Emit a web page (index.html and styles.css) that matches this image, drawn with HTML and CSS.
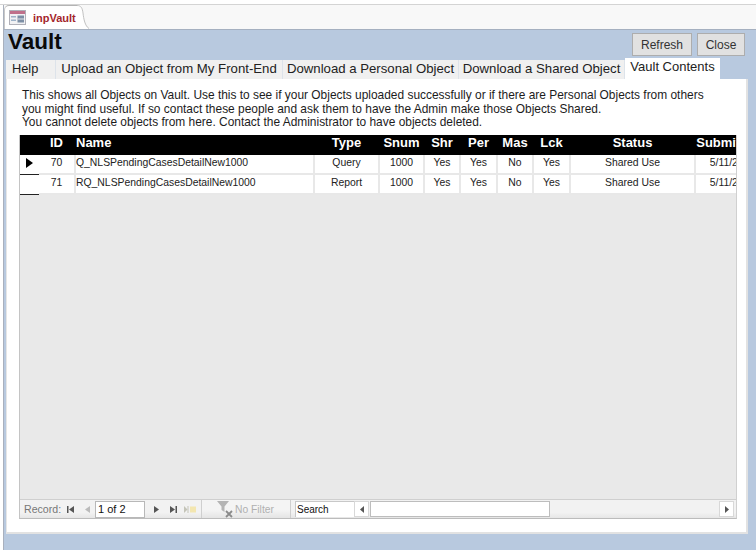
FILE: index.html
```html
<!DOCTYPE html>
<html lang="en">
<head>
<meta charset="utf-8">
<title>inpVault</title>
<link rel="stylesheet" href="styles.css">
</head>
<body>
<div class="app">
  <div class="top-strip"></div>
  <div class="doc-tabs">
    <div class="doc-tab">
      <svg class="form-icon" width="17" height="15" viewBox="0 0 17 15">
        <rect x="0.5" y="0.5" width="16" height="14" fill="#f1f1f3" stroke="#b0b0b8"/>
        <rect x="1" y="1" width="15" height="3" fill="#c0708a"/>
        <rect x="2" y="6" width="5" height="1.500" fill="#9db2c8"/>
        <rect x="2" y="9.500" width="5" height="1.500" fill="#9db2c8"/>
        <rect x="8.500" y="5.500" width="6.500" height="7" fill="#7d8fa5"/>
        <rect x="8.500" y="8.500" width="6.500" height="1" fill="#e6e8ec"/>
      </svg>
      <span class="doc-tab-label">inpVault</span>
    </div>
    <svg class="doc-tab-curve" width="12" height="24" viewBox="0 0 18 24" preserveAspectRatio="none">
      <path d="M0 0 C6 0 8 3 9 8 C10 14 12 21 18 24 L0 24 Z" fill="#fff"/>
      <path d="M0 0.500 C6 0.500 8 3 9 8 C10 14 12 21 18 23.500" fill="none" stroke="#b4b4b4"/>
    </svg>
  </div>
  <div class="form">
    <div class="form-head">
      <h1 class="title">Vault</h1>
      <div class="actions">
        <button class="btn btn-refresh">Refresh</button>
        <button class="btn btn-close">Close</button>
      </div>
    </div>
    <div class="tabs">
      <div class="tab tab-help">Help</div>
      <div class="tab tab-upload">Upload an Object from My Front-End</div>
      <div class="tab tab-personal">Download a Personal Object</div>
      <div class="tab tab-shared">Download a Shared Object</div>
      <div class="tab tab-active">Vault Contents</div>
    </div>
    <div class="panel">
      <p class="intro">This shows all Objects on Vault. Use this to see if your Objects uploaded successfully or if there are Personal Objects from others<br>you might find useful. If so contact these people and ask them to have the Admin make those Objects Shared.<br>You cannot delete objects from here. Contact the Administrator to have objects deleted.</p>
      <div class="sheet">
        <div class="sheet-grid">
          <div class="row row-head">
            <div class="cell"></div>
            <div class="cell">ID</div>
            <div class="cell cell-left">Name</div>
            <div class="cell">Type</div>
            <div class="cell">Snum</div>
            <div class="cell">Shr</div>
            <div class="cell">Per</div>
            <div class="cell">Mas</div>
            <div class="cell">Lck</div>
            <div class="cell">Status</div>
            <div class="cell cell-submit">Submitted</div>
          </div>
          <div class="row row-data">
            <div class="cell selector"><svg width="7" height="10" viewBox="0 0 7 10"><path d="M0 0 L7 5 L0 10 Z" fill="#000"/></svg></div>
            <div class="cell">70</div>
            <div class="cell cell-left">Q_NLSPendingCasesDetailNew1000</div>
            <div class="cell">Query</div>
            <div class="cell">1000</div>
            <div class="cell">Yes</div>
            <div class="cell">Yes</div>
            <div class="cell">No</div>
            <div class="cell">Yes</div>
            <div class="cell">Shared Use</div>
            <div class="cell">5/11/2019</div>
          </div>
          <div class="row row-data">
            <div class="cell selector"></div>
            <div class="cell">71</div>
            <div class="cell cell-left">RQ_NLSPendingCasesDetailNew1000</div>
            <div class="cell">Report</div>
            <div class="cell">1000</div>
            <div class="cell">Yes</div>
            <div class="cell">Yes</div>
            <div class="cell">No</div>
            <div class="cell">Yes</div>
            <div class="cell">Shared Use</div>
            <div class="cell">5/11/2019</div>
          </div>
        </div>
        <div class="navbar">
          <span class="nav-label">Record:</span>
          <svg class="nav-icon nav-first" width="7" height="7" viewBox="0 0 7 7"><path d="M0 0H1.500V7H0ZM7 0V7L2 3.500Z" fill="#555"/></svg>
          <svg class="nav-icon nav-prev" width="5" height="7" viewBox="0 0 5 7"><path d="M5 0V7L0 3.500Z" fill="#bbb"/></svg>
          <div class="nav-input">1 of 2</div>
          <svg class="nav-icon nav-next" width="5" height="7" viewBox="0 0 5 7"><path d="M0 0V7L5 3.500Z" fill="#555"/></svg>
          <svg class="nav-icon nav-last" width="7" height="7" viewBox="0 0 7 7"><path d="M0 0V7L5 3.500ZM5.500 0H7V7H5.500Z" fill="#555"/></svg>
          <svg class="nav-icon nav-new" width="13" height="9" viewBox="0 0 13 9"><path d="M0 1V8L3.500 4.500Z" fill="#c4c4b8"/><path d="M4 1V8" stroke="#c4c4b8"/><path d="M6 1.500H12V7.500H6Z" fill="#f3e6b0"/></svg>
          <div class="nav-filter">
            <svg class="filter-icon" width="17" height="17" viewBox="0 0 17 17">
              <path d="M0 0H12L7.500 5.500V11L4.500 9V5.500Z" fill="#b4b4b4"/>
              <path d="M9 10L15 16M15 10L9 16" stroke="#8a8a8a" stroke-width="1.800"/>
            </svg>
            <span class="filter-label">No Filter</span>
          </div>
          <div class="nav-search">Search</div>
          <div class="scroll">
            <div class="scroll-btn"><svg width="4" height="7" viewBox="0 0 4 7"><path d="M4 0V7L0 3.500Z" fill="#555"/></svg></div>
            <div class="scroll-thumb"></div>
            <div class="scroll-track"></div>
            <div class="scroll-btn"><svg width="4" height="7" viewBox="0 0 4 7"><path d="M0 0V7L4 3.500Z" fill="#555"/></svg></div>
          </div>
        </div>
      </div>
    </div>
  </div>
</div>
</body>
</html>
```

FILE: styles.css
```css
* { box-sizing: border-box; }
html, body { margin: 0; padding: 0; }
body {
  width: 756px;
  height: 550px;
  overflow: hidden;
  background: #fff;
  font-family: "Liberation Sans", Arial, sans-serif;
}
.app {
  height: 550px;
  display: flex;
  flex-direction: column;
}
.top-strip {
  height: 5px;
  flex: none;
  background: #fff;
  border-bottom: 1px solid #d4d4d4;
}
.doc-tabs {
  height: 24px;
  flex: none;
  margin-left: 3px;
  display: flex;
  background: #f8f8f8;
  border-left: 1px solid #a9b0bd;
}
.doc-tab {
  width: 73px;
  height: 24px;
  flex: none;
  display: flex;
  align-items: center;
  padding-left: 4px;
  gap: 7px;
  background: #fff;
  border-top: 1px solid #b4b4b4;
  border-left: 1px solid #c8c8c8;
  border-top-left-radius: 5px;
}
.form-icon { flex: none; }
.doc-tab-label {
  font-size: 11px;
  font-weight: bold;
  color: #a4262c;
  white-space: nowrap;
}
.doc-tab-curve { flex: none; }
.form {
  flex: 1;
  margin-left: 3px;
  display: flex;
  flex-direction: column;
  background: #b8c9df;
  border-left: 1px solid #a9b0bd;
  border-top: 1px solid #a5b0c0;
  padding: 0 8px 16px 2px;
}
.form-head {
  height: 28px;
  flex: none;
  display: flex;
  justify-content: space-between;
  align-items: flex-start;
}
.title {
  margin: 0 0 0 2px;
  font-size: 22.500px;
  line-height: 24px;
  font-weight: bold;
  color: #0a0a0a;
}
.actions {
  display: flex;
  gap: 5px;
  margin-top: 3px;
  margin-right: 3px;
}
.btn {
  height: 23px;
  padding: 0;
  background: #e1e1e1;
  border: 1px solid #adadad;
  font-family: inherit;
  font-size: 12px;
  color: #333;
}
.btn-refresh { width: 60px; }
.btn-close { width: 48px; }
.tabs {
  height: 21px;
  flex: none;
  display: flex;
  align-items: flex-end;
}
.tab {
  height: 19px;
  display: flex;
  align-items: center;
  justify-content: center;
  padding-bottom: 2px;
  background: #f0f0f0;
  border-right: 1px solid #dde3ea;
  font-size: 13.200px;
  color: #222;
  white-space: nowrap;
}
.tab-help { width: 50px; justify-content: flex-start; padding-left: 6px; font-size: 12.800px; }
.tab-upload { width: 227px; }
.tab-personal { width: 176px; }
.tab-shared { width: 166px; }
.tab-active {
  width: 95px;
  height: 21px;
  background: #fff;
  border-right: 0;
  padding-bottom: 4px;
  font-size: 13px;
}
.panel {
  flex: 1;
  min-height: 0;
  display: flex;
  flex-direction: column;
  padding: 10px 9px 13px 12px;
  background: #fff;
  border-right: 2px solid #e2e2e2;
  border-bottom: 2px solid #e2e2e2;
  border-left: 1px solid #e6e6e6;
}
.intro {
  margin: 0 0 5px 3px;
  font-size: 11.930px;
  line-height: 13.500px;
  color: #1c1c1c;
  white-space: nowrap;
}
.sheet {
  flex: 1;
  min-height: 0;
  display: flex;
  flex-direction: column;
  background: #e9e9e9;
  border-left: 1px solid #c4c4c4;
  border-right: 1px solid #d0d0d0;
  border-bottom: 1px solid #bcbcbc;
  overflow: hidden;
}
.sheet-grid {
  flex: 1;
  min-height: 0;
}
.row {
  display: grid;
  grid-template-columns: 19px 37px 239px 65px 45px 36px 37px 36px 37px 125px 75px;
}
.cell {
  display: flex;
  align-items: center;
  justify-content: center;
  white-space: nowrap;
}
.cell-left {
  justify-content: flex-start;
}
.row-head {
  height: 20px;
  background: #000;
  color: #fff;
  font-size: 13px;
  font-weight: bold;
  padding-bottom: 4px;
}
.row-head .cell { padding-right: 2px; }
.row-head .cell-left { padding-right: 0; }
.row-head .cell-submit { padding-right: 11px; }
.row-data {
  height: 20px;
  background: #fff;
  color: #222;
  font-size: 10.400px;
}
.row-data .cell {
  border-right: 2px solid #e8e8e8;
  border-bottom: 2px solid #e8e8e8;
  padding-bottom: 2px;
}
.row-data .selector {
  border-right: 0;
  border-bottom: 1px solid #222;
}
.navbar {
  height: 19px;
  flex: none;
  display: flex;
  align-items: center;
  background: linear-gradient(#f2f2f2, #f2f2f2 70%, #e6e6e6);
  border-top: 1px solid #cfcfcf;
  font-size: 10.600px;
}
.nav-label {
  width: 47px;
  padding-left: 4px;
  color: #777;
  flex: none;
}
.nav-icon { flex: none; }
.nav-prev { margin-left: 11px; }
.nav-input {
  width: 50px;
  height: 17px;
  margin-left: 5px;
  padding: 1px 0 0 2px;
  background: #fff;
  border: 1px solid #b8b8b8;
  font-size: 11px;
  color: #111;
  flex: none;
}
.nav-next { margin-left: 9px; }
.nav-last { margin-left: 11px; }
.nav-new { margin-left: 7px; }
.nav-filter {
  width: 90px;
  height: 18px;
  margin-left: 4px;
  display: flex;
  align-items: center;
  padding-left: 15px;
  gap: 1px;
  border-left: 1px solid #cfcfcf;
  border-right: 1px solid #cfcfcf;
  background: linear-gradient(#f4f4f4, #f4f4f4 55%, #e4e4e4);
  flex: none;
}
.filter-icon { flex: none; margin-top: 1px; }
.filter-label { color: #b0b0b0; font-size: 10.300px; }
.nav-search {
  width: 59px;
  height: 16px;
  margin-left: 4px;
  padding-left: 1px;
  background: #fff;
  border-top: 1px solid #c8c8c8;
  border-left: 1px solid #c8c8c8;
  font-size: 10px;
  line-height: 15px;
  color: #111;
  flex: none;
}
.scroll {
  flex: 1;
  display: flex;
  align-items: center;
  padding-right: 2px;
  gap: 1px;
}
.scroll-btn {
  width: 15px;
  height: 16px;
  display: flex;
  align-items: center;
  justify-content: center;
  background: #fff;
  border: 1px solid #d8d8d8;
  flex: none;
}
.scroll-thumb {
  width: 180px;
  height: 16px;
  background: #fff;
  border: 1px solid #bdbdbd;
  flex: none;
}
.scroll-track { flex: 1; }
```
